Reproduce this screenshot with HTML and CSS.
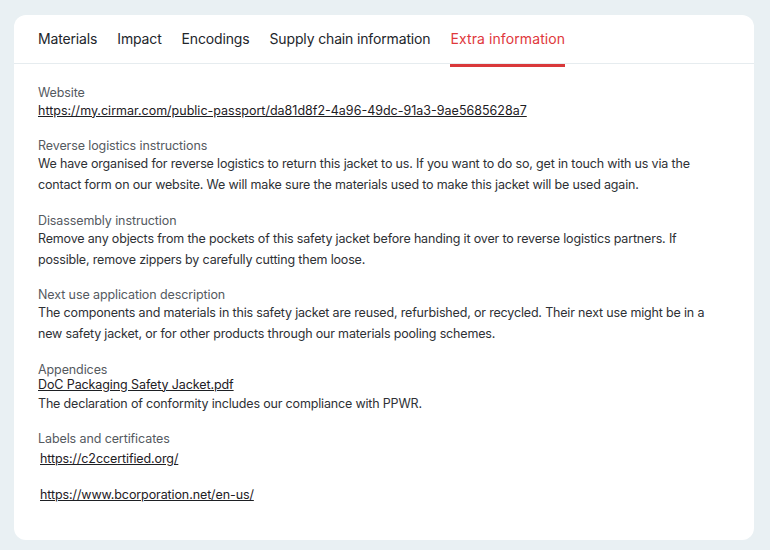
FILE: index.html
```html
<!DOCTYPE html>
<html lang="en">
<head>
<meta charset="utf-8">
<title>Extra information</title>
<link rel="stylesheet" href="styles.css">
</head>
<body>
<div class="card">
  <nav class="tabs">
    <a class="tab">Materials</a>
    <a class="tab">Impact</a>
    <a class="tab">Encodings</a>
    <a class="tab">Supply chain information</a>
    <a class="tab active">Extra information</a>
  </nav>
  <div class="content">
    <section class="field">
      <div class="label">Website</div>
      <a class="link">https://my.cirmar.com/public-passport/da81d8f2-4a96-49dc-91a3-9ae5685628a7</a>
    </section>
    <section class="field">
      <div class="label">Reverse logistics instructions</div>
      <p class="value">We have organised for reverse logistics to return this jacket to us. If you want to do so, get in touch with us via the contact form on our website. We will make sure the materials used to make this jacket will be used again.</p>
    </section>
    <section class="field">
      <div class="label">Disassembly instruction</div>
      <p class="value">Remove any objects from the pockets of this safety jacket before handing it over to reverse logistics partners. If possible, remove zippers by carefully cutting them loose.</p>
    </section>
    <section class="field">
      <div class="label">Next use application description</div>
      <p class="value">The components and materials in this safety jacket are reused, refurbished, or recycled. Their next use might be in a new safety jacket, or for other products through our materials pooling schemes.</p>
    </section>
    <section class="field">
      <div class="label">Appendices</div>
      <a class="link small">DoC Packaging Safety Jacket.pdf</a>
      <p class="value">The declaration of conformity includes our compliance with PPWR.</p>
    </section>
    <section class="field">
      <div class="label">Labels and certificates</div>
      <div class="certs">
        <a class="link cert">https://c2ccertified.org/</a>
        <a class="link cert">https://www.bcorporation.net/en-us/</a>
      </div>
    </section>
  </div>
</div>
</body>
</html>
```
FILE: styles.css
```css
* { box-sizing: border-box; }
body {
  margin: 0;
  background: #e9f0f3;
  font-family: Inter, "Noto Sans", sans-serif;
  color: #2b2b2b;
}
.card {
  margin: 15px 16px 10px 14px;
  width: 740px;
  height: 525px;
  background: #fff;
  border-radius: 12px;
}
.tabs {
  display: flex;
  gap: 20px;
  padding: 0 24px;
  border-bottom: 1px solid #e6ecef;
}
.tab {
  font-size: 14px;
  letter-spacing: -0.15px;
  line-height: 20px;
  padding: 14px 0 15px;
  color: #22252b;
  border-bottom: 3px solid transparent;
  margin-bottom: -4px;
}
.tab.active {
  color: #e0383c;
  letter-spacing: 0.1px;
  border-bottom-color: #d9383a;
}
.content {
  padding: 20.5px 24px 0;
  display: flex;
  flex-direction: column;
  gap: 17.5px;
}
.field {
  display: flex;
  flex-direction: column;
  align-items: flex-start;
}
.label {
  font-size: 12.5px;
  letter-spacing: -0.1px;
  line-height: 15px;
  color: #555a5f;
}
.value {
  margin: 0;
  font-size: 12.5px;
  letter-spacing: -0.17px;
  line-height: 21px;
  color: #2e3135;
}
.link {
  font-size: 12.5px;
  line-height: 21px;
  color: #1e2024;
  text-decoration: underline;
}
.link.small { line-height: 16px; letter-spacing: -0.1px; }
.certs {
  display: flex;
  flex-direction: column;
  gap: 15px;
  padding: 2px 0 0 2px;
}
.cert { line-height: 21px; letter-spacing: -0.1px; }
```
